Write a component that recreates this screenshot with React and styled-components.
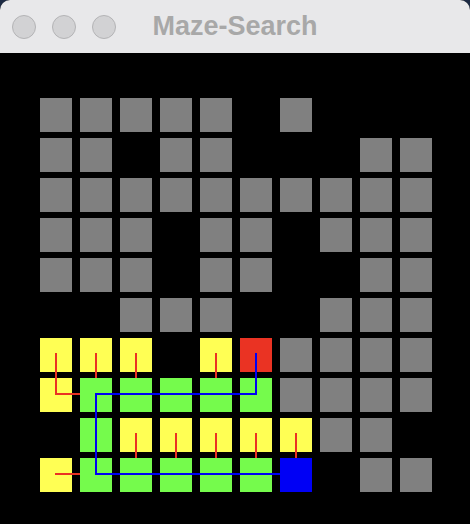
import React from "react";
import styled, { createGlobalStyle } from "styled-components";

const GlobalStyle = createGlobalStyle`
  html, body {
    margin: 0;
    padding: 0;
    background: #1c2a43;
  }
  * { box-sizing: border-box; }
`;

const Window = styled.div`
  width: 470px;
  height: 524px;
  display: flex;
  flex-direction: column;
  border-radius: 10px 10px 0 0;
  overflow: hidden;
  background: #000;
`;

const TitleBar = styled.div`
  height: 53px;
  flex: none;
  background: #e8e8ea;
  display: grid;
  grid-template-columns: 1fr auto 1fr;
  align-items: center;
  padding: 0 12px;
`;

const Lights = styled.div`
  display: flex;
  gap: 16px;
  align-items: center;
`;

const Light = styled.span`
  width: 24px;
  height: 24px;
  border-radius: 50%;
  background: #d2d2d4;
  border: 1px solid #b4b4b6;
`;

const Title = styled.div`
  font-family: "Liberation Sans", Arial, sans-serif;
  font-weight: 700;
  font-size: 27px;
  color: #a8a8a8;
  margin-top: -1px;
`;

const Content = styled.div`
  flex: 1;
  background: #000;
  padding: 45px 0 0 40px;
`;

const Board = styled.div`
  position: relative;
  display: grid;
  grid-template-columns: repeat(10, 32px);
  grid-auto-rows: 34px;
  column-gap: 8px;
  row-gap: 6px;
  width: 392px;
`;

const COLORS = {
  ".": "transparent",
  "#": "#808080",
  y: "#ffff54",
  g: "#75fb4c",
  r: "#ea3323",
  b: "#0000f5",
};

const Cell = styled.div`
  background: ${(p) => COLORS[p.$kind]};
`;

const Overlay = styled.svg`
  position: absolute;
  left: 0;
  top: 0;
  pointer-events: none;
`;

const MAZE = [
  "#####.#...",
  "##.##...##",
  "##########",
  "###.##.###",
  "###.##..##",
  "..###..###",
  "yyy.yr####",
  "yggggg####",
  ".gyyyyy##.",
  "ygggggb.##",
];

const RED = "#ea3323";
const BLUE = "#0000f5";

const redPaths = [
  "M16 255 V296 H40",
  "M56 255 V280",
  "M96 255 V280",
  "M176 255 V280",
  "M96 335 V360",
  "M136 335 V360",
  "M176 335 V360",
  "M216 335 V360",
  "M256 335 V360",
  "M15 376 H40",
];

const bluePath = "M216 255 V296 H56 V376 H240";

export default function App() {
  return (
    <>
      <GlobalStyle />
      <Window>
        <TitleBar>
          <Lights>
            <Light />
            <Light />
            <Light />
          </Lights>
          <Title>Maze-Search</Title>
          <span />
        </TitleBar>
        <Content>
          <Board>
            {MAZE.flatMap((row, r) =>
              row.split("").map((k, c) => <Cell key={`${r}-${c}`} $kind={k} />)
            )}
            <Overlay width="392" height="394" viewBox="0 0 392 394">
              {redPaths.map((d, i) => (
                <path
                  key={i}
                  d={d}
                  stroke={RED}
                  strokeWidth="2"
                  fill="none"
                  strokeLinejoin="miter"
                />
              ))}
              <path
                d={bluePath}
                stroke={BLUE}
                strokeWidth="2"
                fill="none"
                strokeLinejoin="miter"
              />
            </Overlay>
          </Board>
        </Content>
      </Window>
    </>
  );
}
